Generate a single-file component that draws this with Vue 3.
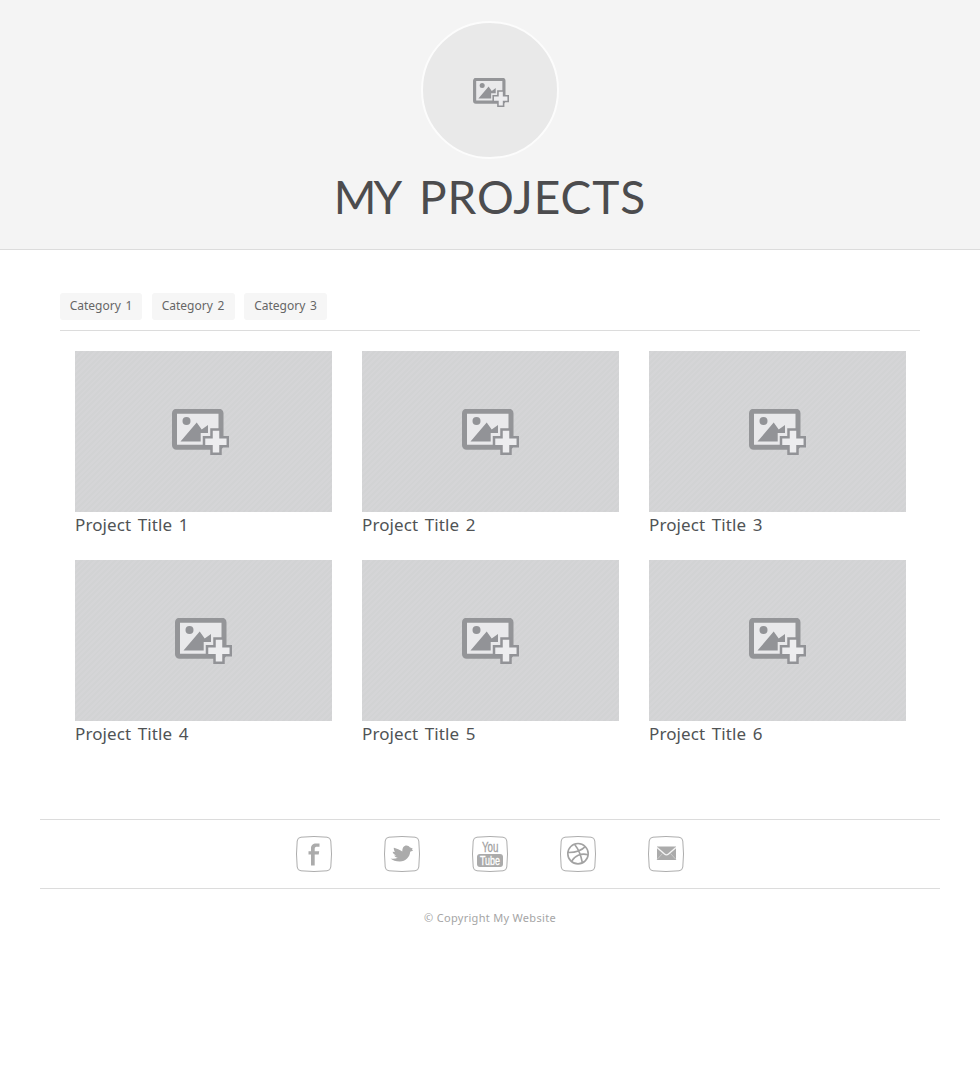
<script setup>
import { h } from 'vue'

const categories = ['Category 1', 'Category 2', 'Category 3']
const projects = [1, 2, 3, 4, 5, 6]

const PictureIcon = () =>
  h('svg', { viewBox: '0 0 57 46', 'aria-hidden': 'true' }, [
    h('rect', { x: 2.5, y: 2.2, width: 46.5, height: 36, rx: 2, fill: '#e9e9eb', stroke: '#949598', 'stroke-width': 5 }),
    h('circle', { cx: 14.5, cy: 12, r: 4, fill: '#929397' }),
    h('path', { d: 'M8.5 32.5 24.7 13.5l5 7 6.3-4.5v8h-7.3v8.5Z', fill: '#929397' }),
    h('path', { d: 'M39.5 20.5h9v7.7h7.3v9h-7.3v7.6h-9v-7.6H32v-9h7.5Z', fill: '#ededef', stroke: '#929397', 'stroke-width': 2.5 })
  ])

const framePath =
  'M5 1.2Q18-.2 31 1.2q3.5.3 3.8 3.8 1.4 13 0 26-.3 3.5-3.8 3.8-13 1.4-26 0-3.5-.3-3.8-3.8-1.4-13 0-26Q1.5 1.5 5 1.2Z'
</script>

<template>
  <div class="page">
    <header class="hero">
      <div class="avatar"><PictureIcon class="avatar-icon" /></div>
      <h1><span class="narrow">MY</span> <span class="wide">PROJECTS</span></h1>
    </header>

    <main>
      <nav class="categories">
        <a v-for="c in categories" :key="c">{{ c }}</a>
      </nav>
      <section class="grid">
        <article v-for="n in projects" :key="n" :class="{ first: n === 1 }">
          <div class="thumb"><PictureIcon class="thumb-icon" /></div>
          <h2>Project Title {{ n }}</h2>
        </article>
      </section>
    </main>

    <footer>
      <div class="social">
        <svg viewBox="0 0 36 36">
          <path class="frame" :d="framePath" />
          <path class="ink" d="M15 29.5V18.5h-2.5v-3.2H15v-2.8c0-3.5 2-5 5-5h3.5v3.200h-2.300c-1.700 0-2.500.6-2.500 2v2.600h4.500l-.5 3.200h-4v11Z" />
        </svg>
        <svg viewBox="0 0 36 36">
          <path class="frame" :d="framePath" />
          <path class="ink" d="M10 11.800c3 .7 5.500 2 8.300 3.700 0-3.800 1.500-6 4.200-6 1.500 0 2.500.8 3.200 1.800l3 1.200-.7 1.200 1.200.8-3 1.300c-.3 5-4.500 9.700-10.400 9.700-4 0-7-1-9.300-3 2.800.5 5.300.2 7.300-.8-1.700-.2-2.800-1-3.500-2.300h2c-2-.8-3.300-1.900-3.700-3.700l2.200.2c-.7-1.500-1.200-2.600-1-4.100Z" />
        </svg>
        <svg viewBox="0 0 36 36">
          <path class="frame" :d="framePath" />
          <text class="you" x="10" y="15.5" textLength="16.5" lengthAdjust="spacingAndGlyphs">You</text>
          <rect class="ink" x="5" y="18" width="26" height="13" rx="3" />
          <text class="tube" x="8" y="29" textLength="20" lengthAdjust="spacingAndGlyphs">Tube</text>
        </svg>
        <svg viewBox="0 0 36 36">
          <path class="frame" :d="framePath" />
          <g class="ball">
            <circle cx="18" cy="17.7" r="10.2" />
            <path d="M8 16.500c7 .2 13-1.500 17.200-5.900M14.500 8.300c4 5 6.500 11 7.800 18.200M11.500 25.500c3-6 9.500-8.500 16.500-6.800" />
          </g>
        </svg>
        <svg viewBox="0 0 36 36">
          <path class="frame" :d="framePath" />
          <path class="ink" d="M9 10.500h19v13.500H9Z" />
          <path class="fold" d="m9 11.500 7.500 6.500q2 1.700 4 0l7.500-6.500" />
          <path class="fold thin" d="M9 23.500l5.500-6M28 23.500l-5.500-6" />
        </svg>
      </div>
      <p>© Copyright My Website</p>
    </footer>
  </div>
</template>

<style>
body { background: #fff; }
</style>

<style scoped>
.page { font-family: "Noto Sans", sans-serif; color: #4c4c4e; min-height: 1092px; }
.hero { box-sizing: border-box; height: 250px; padding-top: 21px; background: #f4f4f4; border-bottom: 1px solid #dcdcdc; display: flex; flex-direction: column; align-items: center; }
.avatar { box-sizing: border-box; width: 138px; height: 138px; border: 2px solid #fcfcfc; border-radius: 50%; background: #e9e9e9; display: flex; justify-content: center; align-items: center; flex: none; }
.avatar-icon { width: 36px; height: 29px; margin: 4px 0 0 2px; }
h1 { margin: 6px 0 0; font-family: Lato, sans-serif; font-size: 46px; line-height: 64px; font-weight: 400; word-spacing: 8px; white-space: nowrap; }
.narrow { letter-spacing: -3px; }
.wide { letter-spacing: 1px; }
main { width: 860px; margin: 0 auto; padding-top: 43px; }
.categories { display: flex; gap: 9.5px; padding-bottom: 10px; border-bottom: 1px solid #dcdcdc; }
.categories a { box-sizing: border-box; width: 83px; height: 27px; border-radius: 3px; background: #f6f6f6; color: #666; font-size: 12px; line-height: 26px; text-align: center; word-spacing: 1.5px; white-space: nowrap; }
.categories a:first-child { width: 82px; }
.grid { display: grid; grid-template-columns: repeat(3, 257px); column-gap: 30px; row-gap: 22px; padding: 20px 15px 0; }
.grid article { height: 187px; }
.thumb { height: 161px; display: flex; justify-content: center; align-items: center; background: repeating-linear-gradient(135deg, #d2d3d4 0 2px, #d5d5d7 2px 4px); }
.thumb-icon { width: 57px; height: 46px; }
.first .thumb-icon { margin-right: 6px; }
h2 { margin: 0; font-size: 17px; line-height: 26px; font-weight: 400; letter-spacing: 0.1px; word-spacing: 2px; color: #505355; white-space: nowrap; }
footer { width: 900px; margin: 72px auto 0; }
.social { display: flex; justify-content: center; align-items: center; gap: 52px; height: 68px; border-top: 1px solid #dcdcdc; border-bottom: 1px solid #dcdcdc; }
.social svg { width: 36px; height: 36px; }
.frame { fill: #fff; stroke: #adadad; stroke-width: 1; }
.ink { fill: #ababab; }
.ball { fill: none; stroke: #a2a2a2; stroke-width: 1.6; }
.fold { fill: none; stroke: #f4f4f4; stroke-width: 1.4; }
.thin { stroke: #cfcfcf; stroke-width: 0.8; }
.you, .tube { font-family: "Liberation Sans", sans-serif; font-size: 14.5px; fill: #a0a0a0; stroke: #a0a0a0; stroke-width: 0.3; }
.tube { font-size: 13px; fill: #fff; stroke: #fff; }
footer p { margin: 20px 0 0; font-size: 11px; line-height: 18px; text-align: center; letter-spacing: 0.3px; color: #a5a5a5; }
</style>
